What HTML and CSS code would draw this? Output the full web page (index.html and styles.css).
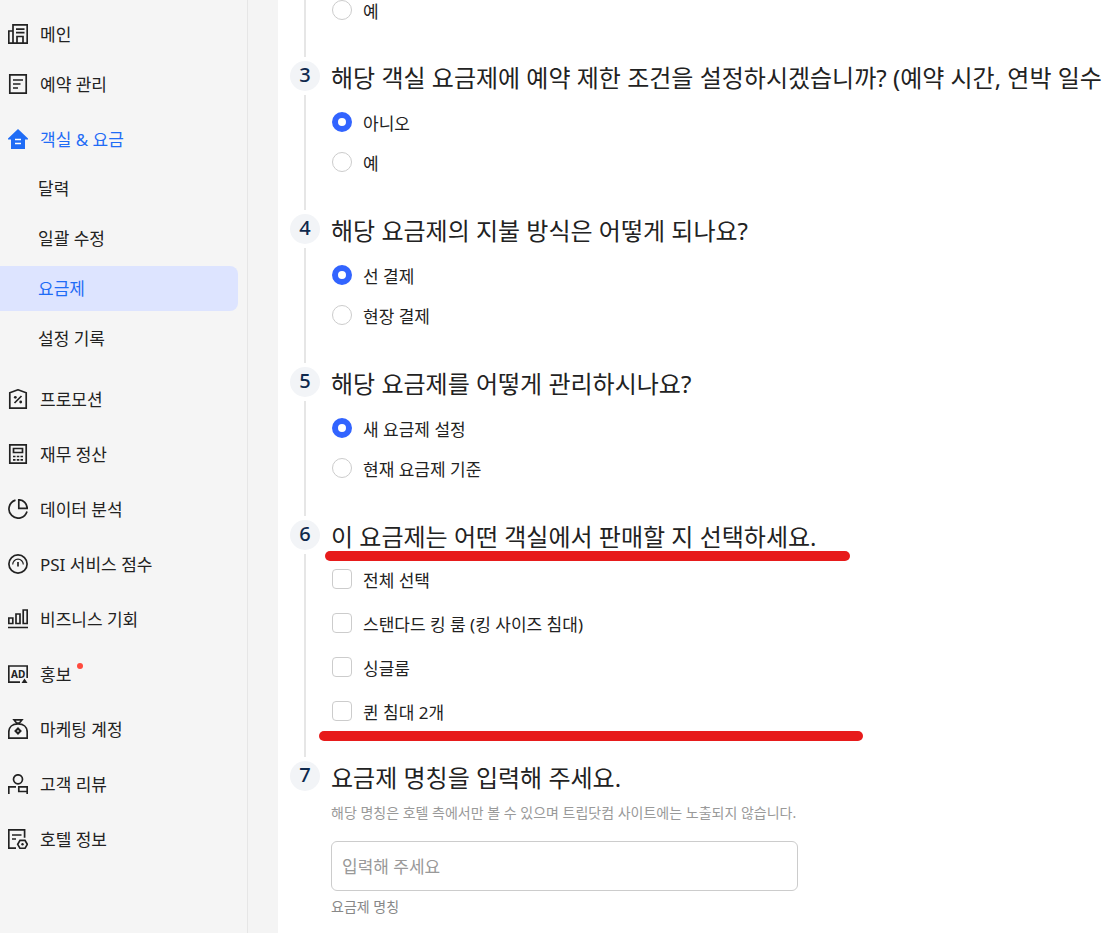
FILE: index.html
```html
<!DOCTYPE html>
<html lang="ko">
<head>
    <meta charset="UTF-8">
    <meta name="viewport" content="width=device-width, initial-scale=1.0">
    <title>요금제</title>
    <link rel="stylesheet" href="styles.css">
</head>
<body>

    <div class="layout">
        <nav class="sidebar">
            <ul class="menu">
                <li class="menu-item menu-first">
                    <a href="#" class="menu-link">
                        <svg class="icon" viewBox="0 0 20 20"><path d="M5 19.2V.8h14.2v18.4H.8V7H5M8 5.2h8.5M8 8.6h8.5M9 19v-6.5h6V19"/></svg>
                        메인
                    </a>
                </li>
                <li class="menu-item">
                    <a href="#" class="menu-link">
                        <svg class="icon" viewBox="0 0 20 20"><path d="M1.8.8h16.4v18.4H1.8zM5 6h10M5 10h7.5M5 14h5"/></svg>
                        예약 관리
                    </a>
                </li>
                <li class="menu-item">
                    <a href="#" class="menu-link active">
                        <svg class="icon" viewBox="0 0 20 20"><path class="fill" d="M10 0l10 9.5v1h-3V20H3v-9.5H0v-1z"/><path class="light" d="M7 10.5h6M7 14.5h6"/></svg>
                        객실 &amp; 요금
                    </a>
                    <ul class="submenu">
                        <li><a href="#" class="submenu-link">달력</a></li>
                        <li><a href="#" class="submenu-link">일괄 수정</a></li>
                        <li><a href="#" class="submenu-link selected">요금제</a></li>
                        <li><a href="#" class="submenu-link">설정 기록</a></li>
                    </ul>
                </li>
                <li class="menu-item">
                    <a href="#" class="menu-link">
                        <svg class="icon" viewBox="0 0 20 20"><path d="M1.8 3.8L10 .8l8.2 3v15.4H1.8zM6.5 14l7-7"/><circle class="fill" cx="7.3" cy="8.3" r="1.4"/><circle class="fill" cx="12.700" cy="13" r="1.4"/></svg>
                        프로모션
                    </a>
                </li>
                <li class="menu-item">
                    <a href="#" class="menu-link">
                        <svg class="icon" viewBox="0 0 20 20"><path d="M1.8.8h16.4v18.4H1.8zM5.5 4.5h9v4h-9zM5 12.5h2.5M8.8 12.5h2.5M12.5 12.5H15M5 15.8h2.5M8.8 15.8h2.5M12.5 15.8H15"/></svg>
                        재무 정산
                    </a>
                </li>
                <li class="menu-item">
                    <a href="#" class="menu-link">
                        <svg class="icon" viewBox="0 0 20 20"><path d="M7.5 1.1A9.2 9.2 0 1 0 19 12.5M10.8.8v8.5h8.4A8.5 8.5 0 0 0 10.8.8z"/></svg>
                        데이터 분석
                    </a>
                </li>
                <li class="menu-item">
                    <a href="#" class="menu-link">
                        <svg class="icon" viewBox="0 0 20 20"><circle cx="10" cy="10" r="9.1"/><path class="thin" d="M4.7 10.5a5.3 5.3 0 0 1 10.6 0"/><path d="M10 8v4.5"/></svg>
                        PSI 서비스 점수
                    </a>
                </li>
                <li class="menu-item">
                    <a href="#" class="menu-link">
                        <svg class="icon" viewBox="0 0 20 20"><path d="M.8 9h4v5.5h-4zM8 5h4v9.5H8zM15.2 1h4v13.5h-4zM0 18.5h20"/></svg>
                        비즈니스 기회
                    </a>
                </li>
                <li class="menu-item">
                    <a href="#" class="menu-link">
                        <svg class="icon" viewBox="0 0 20 20"><path d="M12 18.2H.8V2h18.4v12"/><path class="fill" d="M16.5 14.5l3 4.5h-6z"/><text class="icon-text" x="3" y="13.5">AD</text></svg>
                        <span class="has-dot">홍보</span>
                    </a>
                </li>
                <li class="menu-item">
                    <a href="#" class="menu-link">
                        <svg class="icon" viewBox="0 0 20 20"><path d="M.8 19.2V13C.8 8 4.5 4.8 10 4.8S19.2 8 19.2 13v6.2zM6 .8h8L11.5 4h-3z"/><path class="thick" d="M10 9.5l2.5 2.5-2.5 2.5L7.5 12z"/></svg>
                        마케팅 계정
                    </a>
                </li>
                <li class="menu-item">
                    <a href="#" class="menu-link">
                        <svg class="icon" viewBox="0 0 20 20"><circle cx="10" cy="5.3" r="4.5"/><path d="M.8 20v-7.2H8M19.2 20v-7.2h-8.4v4.7h8.4"/></svg>
                        고객 리뷰
                    </a>
                </li>
                <li class="menu-item">
                    <a href="#" class="menu-link">
                        <svg class="icon" viewBox="0 0 20 20"><path d="M8 19.2H.8V.8h15.8v8M4 6h9.5M4 10h4M12 11.3h5l2.3 4-2.3 4h-5l-2.3-4z"/><circle class="fill" cx="14.5" cy="15.3" r="1.2"/></svg>
                        호텔 정보
                    </a>
                </li>
            </ul>
        </nav>

        <main class="content">
            <section class="step">
                <div class="rail"><span class="line line-first"></span></div>
                <div class="step-body step-cut">
                    <label class="option"><input type="radio" name="q2"> 예</label>
                </div>
            </section>

            <section class="step">
                <div class="rail"><span class="badge">3</span><span class="line"></span></div>
                <div class="step-body">
                    <h2>해당 객실 요금제에 예약 제한 조건을 설정하시겠습니까? (예약 시간, 연박 일수</h2>
                    <div class="options">
                        <label class="option"><input type="radio" name="q3" checked> 아니오</label>
                        <label class="option"><input type="radio" name="q3"> 예</label>
                    </div>
                </div>
            </section>

            <section class="step">
                <div class="rail"><span class="badge">4</span><span class="line"></span></div>
                <div class="step-body">
                    <h2>해당 요금제의 지불 방식은 어떻게 되나요?</h2>
                    <div class="options">
                        <label class="option"><input type="radio" name="q4" checked> 선 결제</label>
                        <label class="option"><input type="radio" name="q4"> 현장 결제</label>
                    </div>
                </div>
            </section>

            <section class="step">
                <div class="rail"><span class="badge">5</span><span class="line"></span></div>
                <div class="step-body">
                    <h2>해당 요금제를 어떻게 관리하시나요?</h2>
                    <div class="options">
                        <label class="option"><input type="radio" name="q5" checked> 새 요금제 설정</label>
                        <label class="option"><input type="radio" name="q5"> 현재 요금제 기준</label>
                    </div>
                </div>
            </section>

            <section class="step">
                <div class="rail"><span class="badge">6</span><span class="line"></span></div>
                <div class="step-body step-rooms">
                    <h2>이 요금제는 어떤 객실에서 판매할 지 선택하세요.</h2>
                    <div class="options rooms">
                        <label class="option"><input type="checkbox"> 전체 선택</label>
                        <label class="option"><input type="checkbox"> 스탠다드 킹 룸 (킹 사이즈 침대)</label>
                        <label class="option"><input type="checkbox"> 싱글룸</label>
                        <label class="option"><input type="checkbox"> 퀸 침대 2개</label>
                    </div>
                    <span class="marker marker-top"></span>
                    <span class="marker marker-bottom"></span>
                </div>
            </section>

            <section class="step">
                <div class="rail"><span class="badge">7</span></div>
                <div class="step-body">
                    <h2>요금제 명칭을 입력해 주세요.</h2>
                    <p class="hint">해당 명칭은 호텔 측에서만 볼 수 있으며 트립닷컴 사이트에는 노출되지 않습니다.</p>
                    <input type="text" id="planName" class="text-input" placeholder="입력해 주세요">
                    <label for="planName" class="caption">요금제 명칭</label>
                </div>
            </section>
        </main>
    </div>

</body>
</html>
```
FILE: styles.css
```css
* {
    box-sizing: border-box;
}

body {
    margin: 0;
    font-family: "Noto Sans", "Noto Sans CJK KR", sans-serif;
    font-size: 17px;
    color: #222;
    background-color: #fff;
}

/* Page layout */
.layout {
    display: flex;
    height: 100vh;
    overflow: hidden;
    background-color: #f4f4f4;
}

/* Sidebar */
.sidebar {
    flex: none;
    width: 248px;
    margin-right: 30px;
    padding: 11px 9px 0 0;
    border-right: 1px solid #e6e6e6;
    background-color: #f5f5f5;
}

.menu, .submenu {
    margin: 0;
    padding: 0;
    list-style: none;
}

.menu-item {
    margin-bottom: 10px;
}

.menu-first {
    margin-bottom: 5px;
}

.menu-link {
    display: flex;
    align-items: center;
    gap: 12px;
    height: 45px;
    padding-left: 8px;
    color: #222;
    text-decoration: none;
}

.menu-link.active {
    color: #1f6cf6;
}

.submenu {
    display: flex;
    flex-direction: column;
    gap: 5px;
    padding: 5px 0;
}

.submenu-link {
    display: flex;
    align-items: center;
    height: 45px;
    padding: 0 0 2px 38px;
    border-radius: 0 8px 8px 0;
    color: #222;
    text-decoration: none;
}

.submenu-link.selected {
    color: #1f6cf6;
    background-color: #dde4ff;
}

.has-dot {
    position: relative;
}

.has-dot::after {
    content: "";
    position: absolute;
    top: 2px;
    right: -12px;
    width: 6px;
    height: 6px;
    border-radius: 50%;
    background-color: #ff4a3d;
}

/* Icons */
.icon {
    flex: none;
    width: 20px;
    height: 20px;
    fill: none;
    stroke: currentColor;
    stroke-width: 1.7;
}

.icon .fill {
    fill: currentColor;
    stroke: none;
}

.icon .light {
    stroke: #fff;
}

.icon .thin {
    stroke-width: 1.2;
}

.icon .thick {
    stroke-width: 2;
}

.icon-text {
    font-size: 10px;
    font-weight: 700;
    fill: currentColor;
    stroke: none;
}

/* Form steps */
.content {
    flex: 1;
    min-width: 0;
    padding-left: 12px;
    overflow: hidden;
    background-color: #fff;
}

.step {
    display: flex;
    gap: 11px;
}

.rail {
    display: flex;
    flex: none;
    flex-direction: column;
    align-items: center;
    width: 30px;
}

.badge {
    width: 30px;
    height: 30px;
    border-radius: 50%;
    font-size: 20px;
    font-weight: 500;
    line-height: 28px;
    text-align: center;
    color: #0f294d;
    background-color: #f2f4f7;
}

.line {
    flex: 1;
    width: 2px;
    margin: 4px 0;
    background-color: #e6e6e6;
}

.line-first {
    margin-top: 0;
}

.step-body {
    position: relative;
    flex: 1;
    min-width: 0;
    padding-bottom: 32px;
}

.step-cut {
    padding: 0 0 41px 1px;
}

.step-cut .option {
    height: 20px;
}

.step-rooms {
    padding-bottom: 28px;
}

h2 {
    margin: 0;
    font-size: 24px;
    font-weight: 400;
    line-height: 34px;
    white-space: nowrap;
}

.options {
    margin-top: 7px;
    padding-left: 1px;
}

.option {
    display: flex;
    align-items: center;
    gap: 11px;
    height: 40px;
}

.rooms {
    margin-top: 3px;
}

.rooms .option {
    height: 44px;
}

.option input {
    flex: none;
    appearance: none;
    width: 20px;
    height: 20px;
    margin: 0;
    border: 1px solid #ccc;
    background-color: #fff;
}

.option input[type="radio"] {
    border-radius: 50%;
}

.option input[type="radio"]:checked {
    border: 6px solid #3264ff;
}

.option input[type="checkbox"] {
    border-radius: 4px;
}

/* Red marker strokes around the room list */
.marker {
    position: absolute;
    height: 10px;
    border-radius: 5px;
    background-color: #e71b1b;
}

.marker-top {
    top: 31px;
    left: -6px;
    width: 525px;
}

.marker-bottom {
    top: 211px;
    left: -12px;
    width: 544px;
}

/* Plan name */
.hint {
    margin: 8px 0 18px;
    font-size: 14px;
    line-height: 20px;
    color: #999;
}

.text-input {
    display: block;
    width: 100%;
    max-width: 467px;
    height: 50px;
    padding: 0 10px;
    border: 1px solid #ccc;
    border-radius: 6px;
    font-family: inherit;
    font-size: 17px;
}

.text-input::placeholder {
    color: #999;
}

.caption {
    display: block;
    margin-top: 6px;
    font-size: 14px;
    line-height: 20px;
    color: #888;
}
```
